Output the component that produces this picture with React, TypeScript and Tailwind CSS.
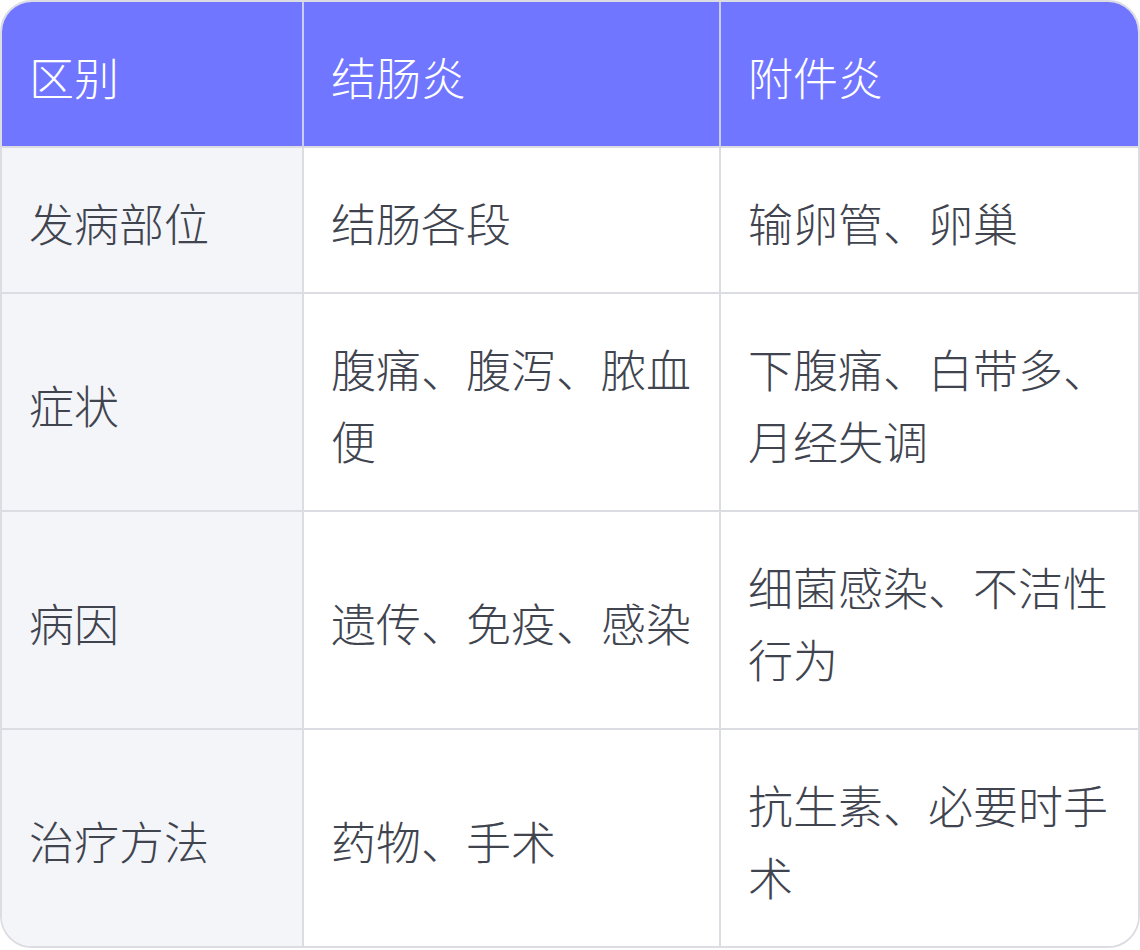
import React from "react";

const rows: [string, string, string][] = [
  ["发病部位", "结肠各段", "输卵管、卵巢"],
  ["症状", "腹痛、腹泻、脓血便", "下腹痛、白带多、月经失调"],
  ["病因", "遗传、免疫、感染", "细菌感染、不洁性行为"],
  ["治疗方法", "药物、手术", "抗生素、必要时手术"],
];

export default function App() {
  return (
    <div
      className="w-[1140px] h-[950px] bg-white"
      style={{ fontFamily: '"Noto Sans CJK SC", "Noto Sans", sans-serif' }}
    >
      <div className="w-[1140px] border-2 border-[#dcdde2] rounded-[32px] overflow-hidden">
        <div className="grid grid-cols-[302px_417px_417px] text-[45px] leading-[72px] font-light">
          {["区别", "结肠炎", "附件炎"].map((h, i) => (
            <div
              key={h}
              className={`bg-[#7076ff] text-white px-[27px] pt-[39px] pb-[33px] border-b-2 border-[#dcdde2] ${
                i < 2 ? "border-r-2 border-r-[#c9ccf4]" : ""
              }`}
            >
              {h}
            </div>
          ))}
          {rows.map((r, ri) =>
            r.map((c, ci) => (
              <div
                key={`${ri}-${ci}`}
                className={`px-[27px] pt-[6px] flex items-center text-[#40444f] border-[#dcdde2] ${
                  ci === 0 ? "bg-[#f4f5f9]" : "bg-white"
                } ${ci < 2 ? "border-r-2" : ""} ${ri < rows.length - 1 ? "border-b-2" : ""} ${
                  ri === 0 ? "h-[146px]" : ri < rows.length - 1 ? "h-[218px]" : "h-[216px]"
                }`}
              >
                <span>{c}</span>
              </div>
            ))
          )}
        </div>
      </div>
    </div>
  );
}
